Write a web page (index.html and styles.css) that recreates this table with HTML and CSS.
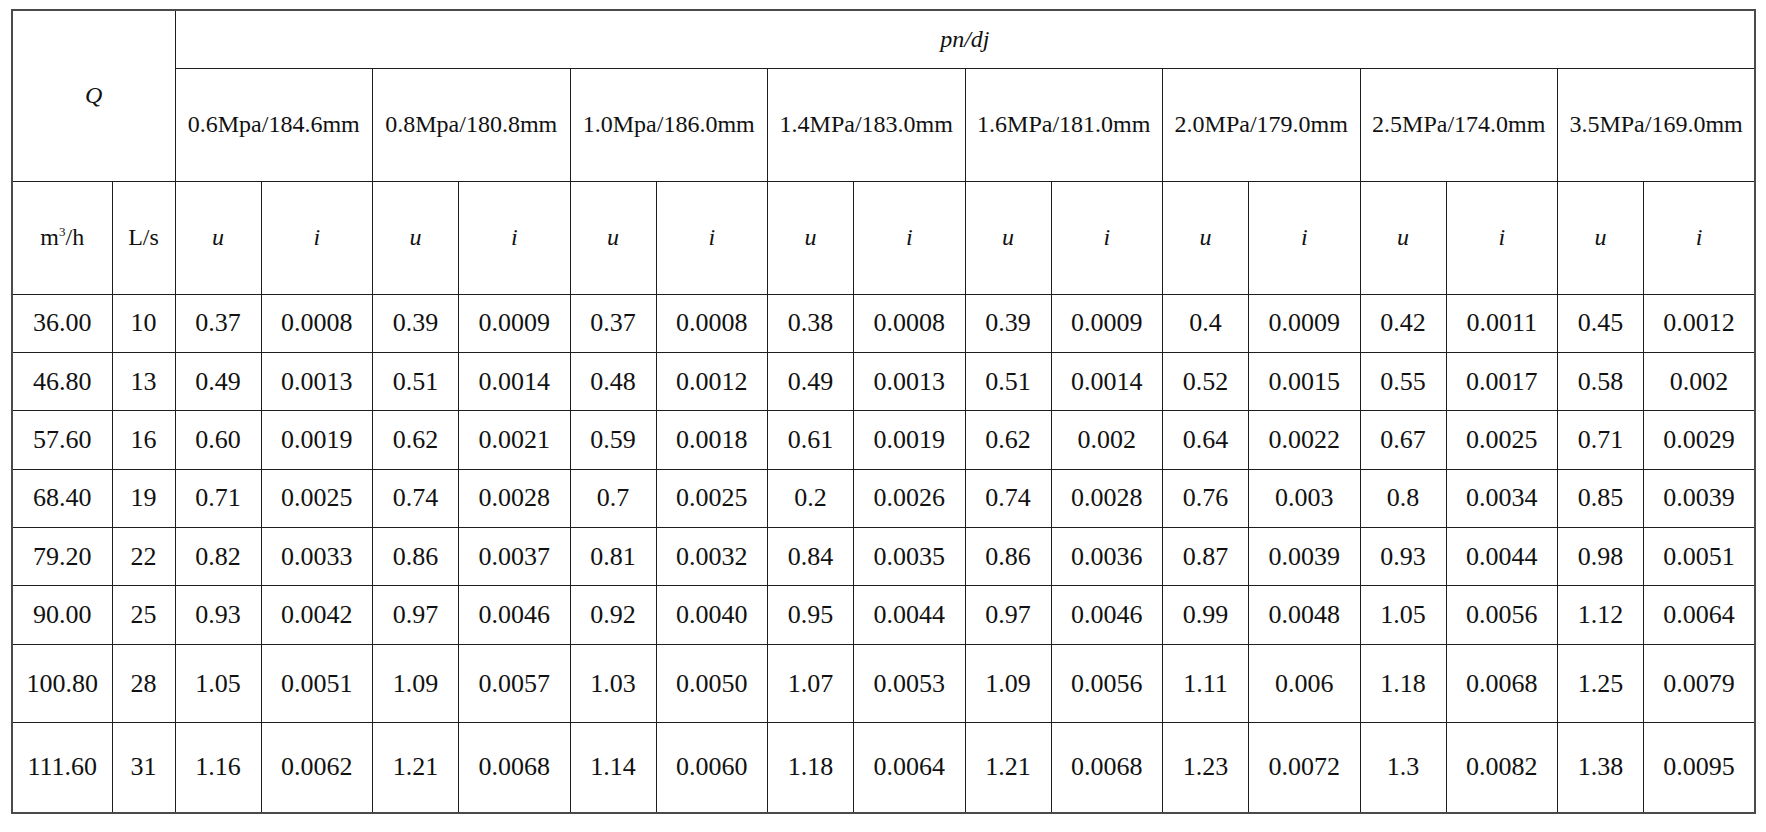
FILE: index.html
```html
<!DOCTYPE html>
<html lang="zh-CN">

<head>
    <meta charset="UTF-8">
    <title>流量与流速、水力坡降对照表</title>
    <link rel="stylesheet" href="styles.css">
</head>

<body>

    <table class="flow-table">
        <colgroup>
            <col class="c-m3">
            <col class="c-ls">
            <col class="c-u"><col class="c-i">
            <col class="c-u"><col class="c-i">
            <col class="c-u"><col class="c-i">
            <col class="c-u"><col class="c-i">
            <col class="c-u"><col class="c-i">
            <col class="c-u"><col class="c-i">
            <col class="c-u"><col class="c-i">
            <col class="c-u"><col class="c-i">
        </colgroup>
        <thead>
            <tr class="row-top">
                <th class="var" colspan="2" rowspan="2">Q</th>
                <th class="var" colspan="16">pn/dj</th>
            </tr>
            <tr class="row-head">
                <th colspan="2">0.6Mpa/184.6mm</th>
                <th colspan="2">0.8Mpa/180.8mm</th>
                <th colspan="2">1.0Mpa/186.0mm</th>
                <th colspan="2">1.4MPa/183.0mm</th>
                <th colspan="2">1.6MPa/181.0mm</th>
                <th colspan="2">2.0MPa/179.0mm</th>
                <th colspan="2">2.5MPa/174.0mm</th>
                <th colspan="2">3.5MPa/169.0mm</th>
            </tr>
            <tr class="row-head">
                <th>m<sup>3</sup>/h</th>
                <th>L/s</th>
                <th class="var">u</th><th class="var">i</th>
                <th class="var">u</th><th class="var">i</th>
                <th class="var">u</th><th class="var">i</th>
                <th class="var">u</th><th class="var">i</th>
                <th class="var">u</th><th class="var">i</th>
                <th class="var">u</th><th class="var">i</th>
                <th class="var">u</th><th class="var">i</th>
                <th class="var">u</th><th class="var">i</th>
            </tr>
        </thead>
        <tbody>
            <tr>
                <td>36.00</td><td>10</td>
                <td>0.37</td><td>0.0008</td><td>0.39</td><td>0.0009</td>
                <td>0.37</td><td>0.0008</td><td>0.38</td><td>0.0008</td>
                <td>0.39</td><td>0.0009</td><td>0.4</td><td>0.0009</td>
                <td>0.42</td><td>0.0011</td><td>0.45</td><td>0.0012</td>
            </tr>
            <tr>
                <td>46.80</td><td>13</td>
                <td>0.49</td><td>0.0013</td><td>0.51</td><td>0.0014</td>
                <td>0.48</td><td>0.0012</td><td>0.49</td><td>0.0013</td>
                <td>0.51</td><td>0.0014</td><td>0.52</td><td>0.0015</td>
                <td>0.55</td><td>0.0017</td><td>0.58</td><td>0.002</td>
            </tr>
            <tr>
                <td>57.60</td><td>16</td>
                <td>0.60</td><td>0.0019</td><td>0.62</td><td>0.0021</td>
                <td>0.59</td><td>0.0018</td><td>0.61</td><td>0.0019</td>
                <td>0.62</td><td>0.002</td><td>0.64</td><td>0.0022</td>
                <td>0.67</td><td>0.0025</td><td>0.71</td><td>0.0029</td>
            </tr>
            <tr>
                <td>68.40</td><td>19</td>
                <td>0.71</td><td>0.0025</td><td>0.74</td><td>0.0028</td>
                <td>0.7</td><td>0.0025</td><td>0.2</td><td>0.0026</td>
                <td>0.74</td><td>0.0028</td><td>0.76</td><td>0.003</td>
                <td>0.8</td><td>0.0034</td><td>0.85</td><td>0.0039</td>
            </tr>
            <tr>
                <td>79.20</td><td>22</td>
                <td>0.82</td><td>0.0033</td><td>0.86</td><td>0.0037</td>
                <td>0.81</td><td>0.0032</td><td>0.84</td><td>0.0035</td>
                <td>0.86</td><td>0.0036</td><td>0.87</td><td>0.0039</td>
                <td>0.93</td><td>0.0044</td><td>0.98</td><td>0.0051</td>
            </tr>
            <tr>
                <td>90.00</td><td>25</td>
                <td>0.93</td><td>0.0042</td><td>0.97</td><td>0.0046</td>
                <td>0.92</td><td>0.0040</td><td>0.95</td><td>0.0044</td>
                <td>0.97</td><td>0.0046</td><td>0.99</td><td>0.0048</td>
                <td>1.05</td><td>0.0056</td><td>1.12</td><td>0.0064</td>
            </tr>
            <tr class="row-tall">
                <td>100.80</td><td>28</td>
                <td>1.05</td><td>0.0051</td><td>1.09</td><td>0.0057</td>
                <td>1.03</td><td>0.0050</td><td>1.07</td><td>0.0053</td>
                <td>1.09</td><td>0.0056</td><td>1.11</td><td>0.006</td>
                <td>1.18</td><td>0.0068</td><td>1.25</td><td>0.0079</td>
            </tr>
            <tr class="row-last">
                <td>111.60</td><td>31</td>
                <td>1.16</td><td>0.0062</td><td>1.21</td><td>0.0068</td>
                <td>1.14</td><td>0.0060</td><td>1.18</td><td>0.0064</td>
                <td>1.21</td><td>0.0068</td><td>1.23</td><td>0.0072</td>
                <td>1.3</td><td>0.0082</td><td>1.38</td><td>0.0095</td>
            </tr>
        </tbody>
    </table>

</body>

</html>
```

FILE: styles.css
```css
body {
    margin: 0;
    background: #fff;
    font-family: 'Liberation Serif', 'Times New Roman', serif;
    color: #111;
}

/* Table frame */
.flow-table {
    margin: 9px 0 0 11px;
    width: 1744px;
    table-layout: fixed;
    border-collapse: collapse;
    border: 2px solid #4a4a4a;
}

.c-m3 {
    width: 100px;
}

.c-ls {
    width: 63px;
}

.c-u {
    width: 86px;
}

.c-i {
    width: 111.5px;
}

.flow-table th,
.flow-table td {
    border: 1px solid #1e1e1e;
    padding: 0;
    text-align: center;
    vertical-align: middle;
    font-size: 24px;
    font-weight: normal;
    white-space: nowrap;
}

/* Numbers are a bit larger than the header text */
.flow-table td {
    font-size: 26px;
}

/* Italic symbols: Q, pn/dj, u, i */
.flow-table .var {
    font-style: italic;
}

.flow-table sup {
    font-size: 13px;
    line-height: 0;
}

/* Row heights */
.row-top {
    height: 58px;
}

.row-head {
    height: 113px;
}

tbody tr {
    height: 58.4px;
}

tbody .row-tall {
    height: 78.4px;
}

tbody .row-last {
    height: 90px;
}
```
